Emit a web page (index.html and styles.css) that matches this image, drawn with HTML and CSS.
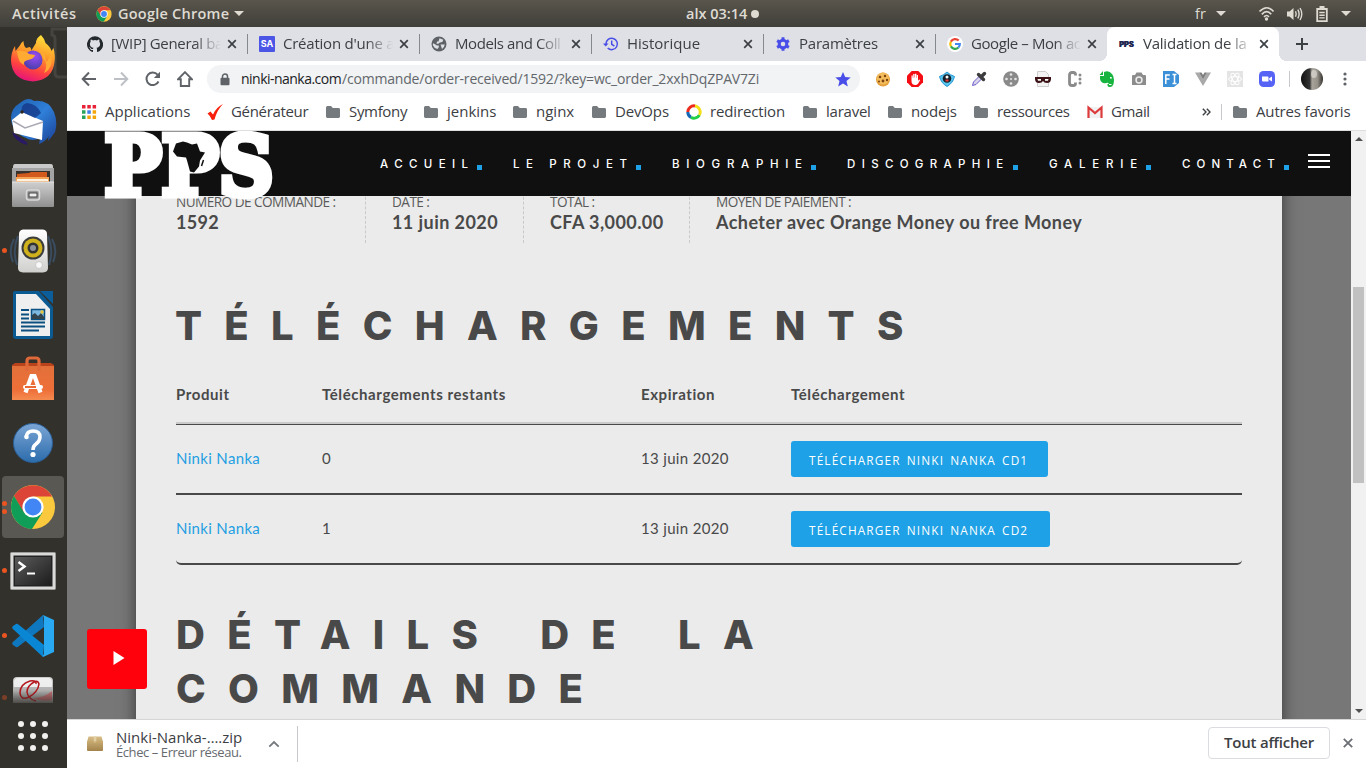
FILE: index.html
```html
<!DOCTYPE html>
<html lang="fr">
<head>
<meta charset="utf-8">
<title>Validation de la commande</title>
<link rel="stylesheet" href="styles.css">
</head>
<body>
<svg width="0" height="0" class="defs">
  <defs>
    <linearGradient id="ff" x1="0.7" y1="0" x2="0.35" y2="1"><stop offset="0" stop-color="#ffe23a"/><stop offset=".4" stop-color="#ff9a2a"/><stop offset=".72" stop-color="#ff4340"/><stop offset="1" stop-color="#e5127c"/></linearGradient>
    <radialGradient id="ffp" cx=".6" cy=".3" r=".7"><stop offset="0" stop-color="#9a4cf5"/><stop offset="1" stop-color="#4a3fae"/></radialGradient>
    <linearGradient id="tb" x1="0" y1="0" x2="1" y2="1"><stop offset="0" stop-color="#1d5fae"/><stop offset=".5" stop-color="#2f7fd8"/><stop offset="1" stop-color="#1a3e94"/></linearGradient>
    <linearGradient id="gry" x1="0" y1="0" x2="0" y2="1"><stop offset="0" stop-color="#cfcfcf"/><stop offset="1" stop-color="#8f8f8f"/></linearGradient>
    <linearGradient id="wht" x1="0" y1="0" x2="0" y2="1"><stop offset="0" stop-color="#fff"/><stop offset="1" stop-color="#cfcfcd"/></linearGradient>
    <linearGradient id="org" x1="0" y1="0" x2="0" y2="1"><stop offset="0" stop-color="#e2703a"/><stop offset=".7" stop-color="#ee6f38"/><stop offset="1" stop-color="#f58b50"/></linearGradient>
    <linearGradient id="hlp" x1="0" y1="0" x2="0" y2="1"><stop offset="0" stop-color="#7ba6d6"/><stop offset="1" stop-color="#2c6cab"/></linearGradient>
    <linearGradient id="trm" x1="0" y1="0" x2="1" y2="1"><stop offset="0" stop-color="#5a5a5a"/><stop offset="1" stop-color="#1d1d1d"/></linearGradient>
    <linearGradient id="box" x1="0" y1="0" x2="0" y2="1"><stop offset="0" stop-color="#d8bd88"/><stop offset="1" stop-color="#a3834b"/></linearGradient>
    <linearGradient id="ava" x1="0" y1="0" x2="1" y2="0"><stop offset="0" stop-color="#111"/><stop offset=".4" stop-color="#333"/><stop offset=".5" stop-color="#a8a49c"/><stop offset=".75" stop-color="#96928a"/><stop offset="1" stop-color="#34322e"/></linearGradient>
    <symbol id="folder" viewBox="0 0 16 16"><path fill="#757a7e" d="M1 3.600Q1 2 2.500 2H6l1.800 2H13.600Q15 4 15 5.400v7.200Q15 14 13.600 14H2.400Q1 14 1 12.600z"/></symbol>
    <symbol id="chrome" viewBox="0 0 46 46">
      <circle cx="23" cy="23" r="22" fill="#fbc93d"/>
      <path fill="#db4437" d="M4 12A22 22 0 0 1 42.100 12.500L23 12.500 13.500 28.500z"/>
      <path fill="#0f9d58" d="M4 12A22 22 0 0 0 22 45L32.500 28.500H14z"/>
      <circle cx="23" cy="23" r="10.600" fill="#fff"/><circle cx="23" cy="23" r="8.400" fill="#4285f4"/>
    </symbol>
    <symbol id="x" viewBox="0 0 10 10"><path d="M1.200 1.200l7.600 7.600M8.800 1.200L1.200 8.800" stroke="#3c4043" stroke-width="1.700"/></symbol>
  </defs>
</svg>

<header class="topbar">
  <span class="act">Activités</span>
  <svg class="tchrome"><use href="#chrome"/></svg>
  <span class="app">Google Chrome</span>
  <i class="caret"></i>
  <span class="clock">alx 03:14</span><i class="dot"></i>
  <span class="lang">fr</span><i class="caret lang-caret"></i>
  <svg class="sys" width="72" height="18" viewBox="0 0 72 18" fill="none" stroke="#dfdbd2">
    <path d="M.5 6.500Q8-1 14.500 6.500M2.800 9.300Q7.800 4 12.200 9.300M5 11.800Q7.600 9.200 10 11.800" stroke-width="1.700"/><circle cx="7.500" cy="14" r="1.700" fill="#dfdbd2" stroke="none"/>
    <path d="M28 6.500h2.500l4-3.500v12l-4-3.500H28z" fill="#dfdbd2" stroke="none"/><path d="M36.500 6.300q1.400 2.700 0 5.400M38.800 4.600q2.600 4.400 0 8.800M41 3q3.600 6 0 12" stroke-width="1.400"/>
    <path d="M58.200 4h9.600v12.200h-9.600z" stroke-width="1.800"/><path d="M60.500 2h5" stroke-width="2"/><path d="M60.300 7.500h5.400M60.300 10.200h5.400M60.300 12.900h5.400" stroke-width="1.400"/>
  </svg>
  <i class="caret"></i>
</header>

<div class="desktop">
<aside class="dock">
  <svg class="ghost" width="18" height="60" viewBox="0 0 18 60"><path d="M18 2H3V8q3 0 3 4v34q0 4 4 4h8" fill="none" stroke="#45443f" stroke-width="3"/></svg>
  <div class="slot"><svg width="46" height="48" viewBox="0 0 46 48"><path fill="url(#ff)" d="M31 1q3 3 4.500 8 5 4 6 8l2-3q2 8 1 14-2 18-21.500 19.500Q2 46 1 27 1 18 5 12l.5 5 4-5q2-4 4-5 0 5 2.500 7l4-1q2 2 1 4l5-8q0-5 5-8z"/><circle cx="23" cy="26" r="9.500" fill="url(#ffp)"/><path fill="#ffab33" d="M7 17q8-1 12 3l6 1q-1 4-7 5-5 1-4 5-6-2-7-14zM29 16q7 3 7 12 4-3 4-9 5 14-6 20 5-9-1-15-1-4-4-8z"/></svg></div>
  <div class="slot"><svg width="50" height="48" viewBox="0 0 50 48"><path fill="url(#tb)" d="M12 5Q20-2 26 3 40 1 46 14q4 10 1 20-4 6-7 9 0-3 1-5-4 6-10 8 1-4 1-6-8 4-14 0-10-4-14-14Q0 12 12 5z"/><path fill="#fff" d="M4 22l10-8 21 9-1 19-28-7z"/><path d="M5 23l12 7 18-6" fill="none" stroke="#a9a9b4" stroke-width="1.500"/><path fill="#12317f" d="M14 14q-2-7 5-9 10 1 14 10l-6 5z" opacity=".7"/><path fill="#2a1a66" d="M4 34l13 9q3 2 2 4-12-3-15-13z"/><circle cx="14" cy="14" r="1.700" fill="#31271c"/></svg></div>
  <div class="slot"><svg width="44" height="46" viewBox="0 0 44 46"><path fill="#c9c9c9" d="M4 1h36q2 0 2 3v18H2V4q0-3 2-3z"/><path fill="#a3a3a3" d="M1 5h42v16H1z"/><path fill="#39322c" d="M5 8h34v14H5z"/><path fill="#d15a1c" d="M6 11l12-1 2-1h16v12H6z"/><path fill="#f6a355" d="M5 14h33v6H5z"/><path fill="#fff1dc" d="M6 16h31v2H6z"/><path fill="url(#gry)" d="M1 19h42v24q0 1-1 1H2q-1 0-1-1z"/><path d="M1 19h42" stroke="#e4e4e4"/><rect x="15.500" y="27" width="13" height="10" rx="2.500" fill="#999" stroke="#d8d8d8" stroke-width="1.500"/><rect x="18" y="30" width="8" height="4" fill="#eee" stroke="#444"/></svg></div>
  <div class="slot run"><svg width="48" height="44" viewBox="0 0 48 44"><g fill="none" stroke="#394c60" stroke-width="2"><path d="M9 7Q3 21 8 36M5 10Q-1 21 4 33M39 7q6 14 1 29M43 10q6 11 1 23"/></g><path d="M10 5q0-4 4-4.500h20Q38 1 38 5l1 34q0 4-5 4.500H14Q9 43 9 39z" fill="url(#wht)"/><circle cx="24" cy="19" r="11.500" fill="#3b3c3c"/><circle cx="24" cy="19" r="9.500" fill="#cfb11c"/><circle cx="24" cy="19" r="5.500" fill="#333"/><circle cx="24" cy="19" r="3" fill="#8c9297"/><circle cx="30" cy="36" r="3.500" fill="#f8f8f8" stroke="#c9c9c9"/></svg></div>
  <div class="slot"><svg width="42" height="50" viewBox="0 0 42 50"><path fill="#0b5a91" d="M3 1h24l14 16v29q0 3-3 3H4q-3 0-3-3V3q0-2 2-2z"/><path fill="#0b5e9a" d="M28 1h13v13z"/><path fill="#efefef" d="M4 4h20l14 15v27H4z"/><path stroke="#0b4f80" stroke-width="2" d="M9 20h8M9 24.500h8M9 28.500h8M9 32.500h24M9 36.500h24M9 40.500h18"/><path fill="#7db8e0" stroke="#0b4f80" stroke-width="1.500" d="M19.500 19.500h13v10h-13z"/><path fill="#33444d" d="M20 29v-4l3-2 3 3 3-3 3 4v2z"/><circle cx="30" cy="22" r="1.700" fill="#e8c53a"/></svg></div>
  <div class="slot"><svg width="44" height="46" viewBox="0 0 44 46"><path fill="#b9431a" d="M1 9l3-2h36l3 2v6H1z"/><path fill="url(#org)" d="M1 10h42v34H1z"/><path d="M16 15V5q0-3 3-3h6q3 0 3 3v10" fill="none" stroke="#e0693a" stroke-width="3.200"/><path d="M14.500 36.500L20.500 20h3l6 16.500" fill="none" stroke="#fff" stroke-width="4.200"/><path stroke="#fff" stroke-width="4" stroke-linecap="round" d="M14 31h16"/><path stroke="#ea6a35" stroke-width="2" d="M14 31h11"/></svg></div>
  <div class="slot"><svg width="42" height="42" viewBox="0 0 42 42"><circle cx="21" cy="21" r="19.500" fill="url(#hlp)" stroke="#2a5f99"/><path d="M14 15q1-6 7-6 7 0 7 6 0 4-4 7-3 2-3 6" fill="none" stroke="#fff" stroke-width="3.500"/><circle cx="14.500" cy="15" r="2.300" fill="#fff"/><circle cx="21" cy="32.500" r="2.600" fill="#fff"/></svg></div>
  <div class="slot active"><svg width="46" height="46"><use href="#chrome"/></svg></div>
  <div class="slot run"><svg width="46" height="38" viewBox="0 0 46 38"><rect x=".5" y=".5" width="45" height="37" rx="1" fill="#dadad8" stroke="#9c9c9a"/><rect x="3.500" y="3.500" width="39" height="31" fill="#222"/><rect x="5" y="5" width="36" height="28" fill="url(#trm)"/><path d="M8.500 10l6 4.500-6 4.500" fill="none" stroke="#fff" stroke-width="2.500"/><path d="M17 21.500h8" stroke="#fff" stroke-width="2"/></svg></div>
  <div class="slot run"><svg width="44" height="44" viewBox="0 0 44 44"><path fill="#0f77be" d="M32 1L3 27q-3 2-1 4l3 2q1 1 3-1L33 13z"/><path fill="#0a87d4" d="M32 43L3 16q-3-2-1-4l3-2q1-1 3 1L33 31z"/><path fill="#29a9f2" d="M32 1l11 5v32l-11 5q-1-1 1-3V4z"/></svg></div>
  <div class="slot last"><svg width="42" height="27" viewBox="0 0 42 27"><path fill="url(#gry)" d="M1 5q0-4 4-4h32q4 0 4 4v22H1z"/><path fill="#f6f6f6" d="M2 6q0-4 4-4h30q4 0 4 4v5H2z" opacity=".85"/><path d="M24 8Q25 4 18 5 8 8 8 17q1 8 9 4 9-5 10-13-1-4-5-2-7 4-7 10 1 7 9 9" fill="none" stroke="#b3151c" stroke-width="1.500"/><path fill="#c8565a" d="M40 15v9q-11 2-19-2 11 0 19-7z" opacity=".7"/></svg></div>
  <div class="apps"><i></i><i></i><i></i><i></i><i></i><i></i><i></i><i></i><i></i></div>
</aside>

<div class="window">
  <div class="tabs">
    <div class="tab"><svg class="fav" viewBox="0 0 16 16"><path fill="#24292e" d="M8 .3a8 8 0 0 0-2.500 15.600c.4 0 .5-.2.500-.4v-1.500c-2.200.5-2.700-1-2.700-1-.4-1-.9-1.200-.9-1.200-.7-.5.1-.5.1-.5.800.1 1.200.9 1.200.9.700 1.200 1.900.9 2.300.7.100-.5.300-.9.500-1.100-1.800-.2-3.600-.9-3.600-4 0-.9.300-1.600.8-2.100-.1-.2-.4-1 .1-2.100 0 0 .7-.2 2.200.8a7.500 7.500 0 0 1 4 0c1.500-1 2.200-.8 2.200-.8.400 1.100.2 1.900.1 2.100.5.500.8 1.200.8 2.100 0 3.100-1.900 3.800-3.700 4 .3.300.6.800.6 1.500v2.200c0 .2.100.5.600.4A8 8 0 0 0 8 .3z"/></svg><span class="tt ls3">[WIP] General ba</span><svg class="cls"><use href="#x"/></svg></div>
    <div class="tab"><span class="fav sa">SA</span><span class="tt ls2">Création d'une a</span><svg class="cls"><use href="#x"/></svg></div>
    <div class="tab"><svg class="fav" viewBox="0 0 16 16"><circle cx="8" cy="8" r="7.500" fill="#5f6368"/><path fill="#dee1e6" d="M2 9.500Q1.500 8 2.300 7.200L6 9.500h1.800v1.700L6.500 13q-3.300-.5-4.500-3.500zM8.500 2.300l3.800 1.500-1 2.200-2.500.5-1.500 1.300H5.500L6 5.500h1.500zM9.500 8.500h4.300q-.5 3.200-2.800 4.500l-.6-2z"/></svg><span class="tt ls4">Models and Coll</span><svg class="cls"><use href="#x"/></svg></div>
    <div class="tab"><svg class="fav" viewBox="0 0 16 16"><path fill="none" stroke="#4a4ee8" stroke-width="1.500" d="M3 8a5.700 5.700 0 1 1 1.700 4M8.700 4.500V8.300l2.700 1.700"/><path fill="#4a4ee8" d="M0 7.500h5.500L2.700 10.500z"/></svg><span class="tt">Historique</span><svg class="cls"><use href="#x"/></svg></div>
    <div class="tab"><svg class="fav" viewBox="0 0 16 16"><circle cx="8" cy="8" r="3.800" fill="none" stroke="#4a4ee8" stroke-width="3"/><path d="M8 1.200v3M8 11.800v3M2.100 4.600l2.600 1.500M11.300 9.900l2.600 1.500M2.100 11.400l2.600-1.500M11.300 6.100l2.600-1.500" stroke="#4a4ee8" stroke-width="3"/></svg><span class="tt ls2">Paramètres</span><svg class="cls"><use href="#x"/></svg></div>
    <div class="tab nosep"><svg class="fav" viewBox="0 0 16 16"><circle cx="8" cy="8" r="8" fill="#fff"/><g fill="none" stroke-width="2.200"><path stroke="#ea4335" d="M3.900 5.600a4.900 4.900 0 0 1 7.800-1"/><path stroke="#fbbc05" d="M3.900 10.400a4.900 4.900 0 0 1 0-4.800"/><path stroke="#34a853" d="M11.500 11.500a4.900 4.900 0 0 1-7.600-1.100"/><path stroke="#4285f4" d="M8 8h4.800a4.900 4.900 0 0 1-1.400 3.600"/></g></svg><span class="tt ls4">Google – Mon ac</span><svg class="cls"><use href="#x"/></svg></div>
    <div class="tab on"><span class="fav pps">PPS</span><span class="tt ls2">Validation de la</span><svg class="cls"><use href="#x"/></svg></div>
    <svg class="plus" width="12" height="12" viewBox="0 0 12 12"><path d="M6 0v12M0 6h12" stroke="#3c4043" stroke-width="2"/></svg>
  </div>

  <div class="toolbar">
    <svg class="nav" viewBox="0 0 16 16"><path d="M15 8H2M8 1.500L1.700 8 8 14.500" fill="none" stroke="#5f6368" stroke-width="2"/></svg>
    <svg class="nav" viewBox="0 0 16 16"><path d="M1 8h13M8 1.500L14.300 8 8 14.500" fill="none" stroke="#bdc1c6" stroke-width="2"/></svg>
    <svg class="nav" viewBox="0 0 16 16"><path d="M13.500 10.500A6.300 6.300 0 1 1 12.600 3.700" fill="none" stroke="#5f6368" stroke-width="2"/><path fill="#5f6368" d="M15 .8V7H8.800z"/></svg>
    <svg class="nav" viewBox="0 0 16 16"><path d="M8 1.200L1.200 8.200H3.800V15h8.400V8.200h2.600z" fill="none" stroke="#5f6368" stroke-width="1.900"/></svg>
    <div class="omni">
      <svg width="10" height="13" viewBox="0 0 10 13"><path d="M2.500 5.500V3.500a2.500 2.500 0 0 1 5 0v2" fill="none" stroke="#5f6368" stroke-width="1.500"/><rect x=".5" y="4.800" width="9" height="7.500" rx="1" fill="#5f6368"/></svg>
      <span class="host">ninki-nanka.com</span><span class="path">/commande/order-received/1592/?key=wc_order_2xxhDqZPAV7Zi</span>
      <svg class="star" width="16" height="15" viewBox="0 0 16 15"><path fill="#4a4ee8" d="M8 0l2.200 5 5.500.5-4.200 3.600 1.300 5.400L8 11.600l-4.800 2.900 1.300-5.400L.3 5.500 5.800 5z"/></svg>
    </div>
    <div class="exts">
      <svg viewBox="0 0 16 16"><circle cx="8" cy="8.500" r="7" fill="#e6a23c"/><circle cx="8" cy="7.500" r="6" fill="#f3bc5c"/><g fill="#7c4311"><circle cx="5" cy="6" r="1.300"/><circle cx="10" cy="5" r="1.200"/><circle cx="8" cy="10" r="1.400"/><circle cx="12" cy="9" r="1.200"/><circle cx="4" cy="10.500" r="1"/></g></svg>
      <svg viewBox="0 0 16 16"><path fill="#f40d12" d="M4.700 0h6.600L16 4.700v6.600L11.300 16H4.700L0 11.300V4.700z"/><path fill="#fff" d="M4.500 8V4.500h1.300V7h.4V3h1.400v3.500H8V2.800h1.400v4h.4V4H11v6l1-1.500 1.200.5-2 3.500q-1 1.500-3 1.500-3.700 0-3.700-4z"/></svg>
      <svg viewBox="0 0 16 16"><path fill="#57c4ee" stroke="#2794cf" d="M.5 5.500Q5 4 8 1q3 3 7.500 4.500Q14 12 8 15.500 2 12 .5 5.500z"/><circle cx="8" cy="7.500" r="4.300" fill="#16222b"/><circle cx="8" cy="6" r="1.500" fill="#fff"/><path d="M6.500 9.500h3" stroke="#e33" stroke-width="2"/></svg>
      <svg viewBox="0 0 16 16"><path d="M1.500 14.500l1-3.500 6-6 2.500 2.500-6 6z" fill="#d9d3ea" stroke="#6d5bc9"/><path d="M7.500 3.500l5 5M10.500 5.500l3-3" stroke="#3c3c3f" stroke-width="3.400" stroke-linecap="round"/></svg>
      <svg viewBox="0 0 16 16"><circle cx="8" cy="8" r="7.800" fill="#8a8a8a"/><g fill="#e6e6e6"><circle cx="8" cy="3.500" r="1.300"/><circle cx="8" cy="12.500" r="1.300"/><circle cx="3.500" cy="8" r="1.300"/><circle cx="12.500" cy="8" r="1.300"/><circle cx="8" cy="8" r="1"/></g></svg>
      <svg viewBox="0 0 16 16"><path fill="#f3f3f3" stroke="#ccc" d="M2.500.5h8l3 3v12h-11z"/><path fill="#3b1216" d="M0 6h16q.5 6-4 6-3 0-4-2-1 2-4 2-4.500 0-4-6z"/><path fill="#fff" d="M2.500 8h3.500v1.800H3zM10 8h3.500L13 9.800h-3z"/></svg>
      <svg viewBox="0 0 16 16"><path d="M8.500 4.500V3.500Q8.500 1.500 6.500 1.500h-1.500Q2.500 1.500 2.500 4v8q0 2.500 2.500 2.500h1.500Q8.500 14.500 8.500 12.500v-1" fill="none" stroke="#8b8b8b" stroke-width="2.800"/><g fill="#8b8b8b"><circle cx="13" cy="4" r="1.500"/><circle cx="13" cy="8" r="1.500"/><circle cx="13" cy="12" r="1.500"/></g></svg>
      <svg viewBox="0 0 16 16"><path fill="#17b53f" d="M5 1q5-2 8 2 3 3 1.500 10-1 3-3.500 3-3 0-2.500-2.500.500-1.500 2-1-1.500-1-3-.5Q2 13 1 8V5h4z"/><path fill="#17b53f" d="M4 0v4H.5z"/><path fill="#fff" d="M11 6h1.500l.5 1.500h-2zM10 13h2.500v1H10z"/></svg>
      <svg viewBox="0 0 16 16"><path fill="#8c8c8c" d="M2 4h2l1.500-2.500h5L12 4h2q1 0 1 1v9H1V5q0-1 1-1z"/><circle cx="8" cy="9" r="3.700" fill="#eee"/><circle cx="8" cy="9" r="2.200" fill="#8c8c8c"/></svg>
      <svg viewBox="0 0 16 16"><path fill="#3c90d8" d="M0 0h11l5 4v8l-5 4H0z"/><path d="M2.800 13V4h4M3 8h3.500M9.500 3.500h4M11.500 3.500v9M9.500 12.500h4" stroke="#fff" stroke-width="1.500" fill="none"/></svg>
      <svg viewBox="0 0 16 16"><path fill="#a9a9a9" d="M0 1.500h4L8 8.500l4-7h4L8 15z"/><path fill="#7e7e7e" d="M4 1.500h2.500L8 4l1.500-2.500H12l-4 7z"/></svg>
      <svg viewBox="0 0 16 16"><path fill="#e4e4e4" d="M0 0h16v16H0z"/><g fill="none" stroke="#fff"><ellipse cx="8" cy="8" rx="6.500" ry="2.500"/><ellipse cx="8" cy="8" rx="6.500" ry="2.500" transform="rotate(60 8 8)"/><ellipse cx="8" cy="8" rx="6.500" ry="2.500" transform="rotate(120 8 8)"/></g></svg>
      <svg viewBox="0 0 16 16"><rect width="16" height="16" rx="4.500" fill="#5663f5"/><path fill="#fff" d="M3 5.500h5.500q1 0 1 1v4H4q-1 0-1-1zM10.200 7.300L13 5.500v5l-2.800-1.800z"/></svg>
    </div>
    <i class="vsep"></i>
    <svg class="avatar" width="22" height="22" viewBox="0 0 22 22"><circle cx="11" cy="11" r="11" fill="url(#ava)"/><ellipse cx="13" cy="6" rx="3" ry="4" fill="#e8e6e0" opacity=".6"/></svg>
    <svg class="dots" width="4" height="14" viewBox="0 0 4 14" fill="#5f6368"><circle cx="2" cy="2" r="1.600"/><circle cx="2" cy="7" r="1.600"/><circle cx="2" cy="12" r="1.600"/></svg>
  </div>

  <div class="marks">
    <div class="mk"><svg viewBox="0 0 16 16"><path fill="#ea2238" d="M1 1h3.500v3.500H1zM6.300 1h3.500v3.500H6.300zM11.600 1h3.500v3.500h-3.500z"/><path fill="#27a35a" d="M1 6.300h3.500v3.500H1zM1 11.600h3.500v3.500H1z"/><path fill="#3f7de8" d="M6.300 6.300h3.500v3.500H6.300z"/><path fill="#f2a60c" d="M11.600 6.300h3.500v3.500h-3.500zM6.300 11.600h3.500v3.500H6.300zM11.600 11.600h3.500v3.500h-3.500z"/></svg><span>Applications</span></div>
    <div class="mk"><svg viewBox="0 0 16 16"><path fill="#f8200c" d="M.5 9.500l3-2 2.500 3Q9 3.500 16 0 10 6 7.500 15.500L5 16Q3.500 12 .5 9.500z"/></svg><span class="ls3">Générateur</span></div>
    <div class="mk"><svg><use href="#folder"/></svg><span class="ls3">Symfony</span></div>
    <div class="mk"><svg><use href="#folder"/></svg><span>jenkins</span></div>
    <div class="mk"><svg><use href="#folder"/></svg><span>nginx</span></div>
    <div class="mk"><svg><use href="#folder"/></svg><span class="ls1">DevOps</span></div>
    <div class="mk"><svg viewBox="0 0 16 16" fill="none" stroke-width="3"><path stroke="#1268b5" d="M1.800 8A6.200 6.200 0 0 0 5 13.400"/><path stroke="#1fcf45" d="M5 13.400A6.200 6.200 0 0 0 13.400 11"/><path stroke="#f3e01b" d="M13.400 11A6.200 6.200 0 0 0 9 1.900"/><path stroke="#ef2b1d" d="M9 1.900A6.200 6.200 0 0 0 1.800 8"/></svg><span class="ls1">redirection</span></div>
    <div class="mk"><svg><use href="#folder"/></svg><span class="ls2">laravel</span></div>
    <div class="mk"><svg><use href="#folder"/></svg><span class="ls1">nodejs</span></div>
    <div class="mk"><svg><use href="#folder"/></svg><span class="ls3">ressources</span></div>
    <div class="mk"><svg viewBox="0 0 16 16"><path fill="#f1f1f1" d="M1 3h14v11H1z"/><path d="M1.500 14V3.500L8 9l6.500-5.500V14" fill="none" stroke="#dd3b3b" stroke-width="2.200"/></svg><span class="ls4">Gmail</span></div>
    <svg class="chev" width="9" height="8" viewBox="0 0 9 8"><path d="M.8.800L4 4 .8 7.200M4.800.800L8 4 4.800 7.200" fill="none" stroke="#3c4043" stroke-width="1.400"/></svg>
    <i class="vsep"></i>
    <div class="mk other"><svg><use href="#folder"/></svg><span class="ls1">Autres favoris</span></div>
  </div>

  <div class="viewport">
    <main class="page">
      <div class="card">
        <ul class="overview">
          <li class="o1">NUMÉRO DE COMMANDE :<strong class="n">1592</strong></li>
          <li class="o2">DATE :<strong>11 juin 2020</strong></li>
          <li class="o3">TOTAL :<strong>CFA 3,000.00</strong></li>
          <li class="o4">MOYEN DE PAIEMENT :<strong>Acheter avec Orange Money ou free Money</strong></li>
        </ul>
        <h2>TÉLÉCHARGEMENTS</h2>
        <div class="table">
          <div class="row head"><span>Produit</span><span>Téléchargements restants</span><span>Expiration</span><span>Téléchargement</span></div>
          <div class="row"><a>Ninki Nanka</a><span>0</span><span>13 juin 2020</span><span class="cell"><b class="btn">TÉLÉCHARGER NINKI NANKA CD1</b></span></div>
          <div class="row end"><a>Ninki Nanka</a><span>1</span><span>13 juin 2020</span><span class="cell"><b class="btn two">TÉLÉCHARGER NINKI NANKA CD2</b></span></div>
        </div>
        <h2 class="details">DÉTAILS DE LA<br>COMMANDE</h2>
      </div>
      <header class="site">
        <svg class="logo" width="170" height="68" viewBox="0 0 170 68">
          <g class="logotext"><text x="-.5" y="63.500" textLength="169" lengthAdjust="spacingAndGlyphs">PPS</text></g>
          <path fill="#fff" d="M66 9h34v32H66z"/>
          <path fill="#101010" d="M71 12.500l7-2 4 1 5 2 5-1 3 8 5 1-5 8-1 6-5 6-4-1-3-11-1-3-9-1-4-5z"/><path stroke="#101010" stroke-width="1.500" d="M98.500 29l-2 6"/>
        </svg>
        <nav>
          <a class="m1">ACCUEIL</a><a class="m2">LE PROJET</a><a class="m3">BIOGRAPHIE</a><a class="m4">DISCOGRAPHIE</a><a class="m5">GALERIE</a><a class="m6">CONTACT</a>
        </nav>
        <div class="burger"><i></i><i></i><i></i></div>
      </header>
      <div class="video"><svg width="12" height="14" viewBox="0 0 12 14"><path fill="#fff" d="M.5 0L11.500 7 .5 14z"/></svg></div>
    </main>
    <div class="scroll"><i class="up"></i><div class="thumb"></div><i class="down"></i></div>
  </div>

  <footer class="shelf">
    <svg class="zip" width="16" height="15" viewBox="0 0 16 15"><path fill="url(#box)" d="M1.500.5h13L16 6v8q0 1-1 1H1q-1 0-1-1V6z"/><path fill="#e3cfa5" d="M6.700.5h2.600v6H6.700z"/><path d="M0 6h16" stroke="#c6a869"/></svg>
    <div class="file"><span class="fname">Ninki-Nanka-….zip</span><span class="fstat">Échec – Erreur réseau.</span></div>
    <svg class="upc" width="12" height="8" viewBox="0 0 12 8"><path d="M1.300 6.700L6 2l4.700 4.700" fill="none" stroke="#757a7e" stroke-width="1.800"/></svg>
    <i class="vsep tall"></i>
    <div class="all">Tout afficher</div>
    <svg class="xx" width="10" height="10" viewBox="0 0 10 10"><path d="M.8.800l8.400 8.400M9.200.800L.8 9.200" stroke="#6b6f74" stroke-width="1.800"/></svg>
  </footer>
</div>
</div>
</body>
</html>
```
FILE: styles.css
```css
* { box-sizing: border-box; }
body { margin: 0; width: 1366px; height: 768px; overflow: hidden; font-family: "Open Sans", sans-serif; font-size: 15px; color: #3c4043; display: flex; flex-direction: column; }
svg { display: block; flex: none; }
i { display: block; flex: none; }
.defs { position: absolute; }

/* system bar */
.topbar { height: 27px; flex: none; display: flex; align-items: center; padding: 0 15px 0 12px; background: linear-gradient(#59554c, #403f3a); color: #dfdbd2; font-weight: 600; font-size: 14.5px; white-space: nowrap; }
.act { width: 84px; letter-spacing: .56px; }
.tchrome { width: 16px; height: 16px; margin-right: 6px; }
.app { width: 116px; letter-spacing: .24px; }
.caret { border: 5px solid transparent; border-top-color: #dfdbd2; border-bottom: 0; }
.clock { margin-left: 442px; width: 64px; }
.dot { width: 8px; height: 8px; border-radius: 50%; background: #dfdbd2; margin-left: 1px; }
.lang { margin-left: auto; width: 21px; font-weight: 500; }
.sys { margin: 0 10px 0 33px; }

.desktop { flex: 1; display: flex; min-height: 0; }

/* launcher */
.dock { width: 67px; flex: none; background: #33312c; display: flex; flex-direction: column; position: relative; }
.ghost { position: absolute; right: 0; top: 0; }
.slot { height: 64.2px; flex: none; display: flex; align-items: center; justify-content: center; position: relative; padding-right: 1px; }
.slot:first-of-type { margin-top: -1px; }
.active { width: 62px; height: 62px; margin: 1px 3px 1px 2px; background: #5a5853; border-radius: 4px; padding-right: 0; }
.run::before, .active::before, .active::after, .last::before { content: ""; position: absolute; left: 2px; top: 29px; width: 5px; height: 5px; border-radius: 50%; background: #e95420; }
.active::before { top: 25px; left: 0; }
.active::after { top: 33px; left: 0; }
.last { height: 27px; margin-top: 8px; }
.last svg { -webkit-mask-image: linear-gradient(#000 55%, rgba(0,0,0,.3)); mask-image: linear-gradient(#000 55%, rgba(0,0,0,.3)); }
.last::before { top: 19px; opacity: .4; }
.apps { display: grid; grid-template-columns: repeat(3, 6px); gap: 6px; margin: 18px 0 0 18px; }
.apps i { width: 6px; height: 6px; border-radius: 50%; background: #f2f1ef; }

.window { flex: 1; display: flex; flex-direction: column; min-width: 0; background: #fff; }

/* tabs */
.tabs { height: 34px; flex: none; background: #dfe0e6; display: flex; align-items: center; padding-left: 8px; }
.tab { width: 172px; height: 34px; padding: 0 10px 0 12px; display: flex; align-items: center; position: relative; }
.tab:not(.on):not(.nosep)::after { content: ""; position: absolute; right: -1px; top: 7px; width: 1px; height: 20px; background: #85888d; }
.nosep::before { content: ""; }
.fav { width: 16px; height: 16px; flex: none; margin-right: 8px; }
.sa { background: #4b55e6; color: #fff; font: 700 9px/16px Inter, sans-serif; text-align: center; border-radius: 1px; }
.pps { font: 900 7.5px/17px Inter, sans-serif; color: #20264f; letter-spacing: -.1px; text-shadow: .4px 0 #20264f; }
.tt { width: 110px; height: 24px; line-height: 23px; overflow: hidden; white-space: nowrap; -webkit-mask-image: linear-gradient(90deg, #000 76%, transparent); mask-image: linear-gradient(90deg, #000 76%, transparent); }
.cls { width: 10px; height: 10px; margin-left: 6px; }
.on { background: #fff; border-radius: 8px 8px 0 0; }
.on::before, .on::after { content: ""; position: absolute; bottom: 0; width: 8px; height: 8px; }
.on::before { left: -8px; background: radial-gradient(circle at 0 0, transparent 8px, #fff 8px); }
.on::after { right: -8px; background: radial-gradient(circle at 100% 0, transparent 8px, #fff 8px); }
.plus { margin-left: 17px; }
.ls1 { letter-spacing: -.15px; }
.ls2 { letter-spacing: -.23px; }
.ls3 { letter-spacing: -.33px; }
.ls4 { letter-spacing: -.41px; }

/* toolbar */
.toolbar { height: 36px; flex: none; display: flex; align-items: center; padding-left: 14px; }
.nav { width: 16px; height: 16px; margin-right: 16px; }
.omni { width: 653px; height: 28px; margin-left: -2px; background: #f1f3f4; border-radius: 14px; display: flex; align-items: center; padding: 0 9px 0 13px; font-size: 14px; line-height: 18px; white-space: nowrap; }
.omni span { padding-bottom: 1px; }
.host { margin-left: 11px; color: #202124; width: 101px; letter-spacing: -.52px; }
.path { color: #63676c; letter-spacing: -.19px; }
.star { margin-left: auto; }
.exts { display: flex; margin-left: 15px; gap: 16px; }
.exts svg { width: 16px; height: 16px; }
.vsep { width: 1px; height: 16px; background: #c6c8cc; }
.toolbar .vsep { margin-left: 14px; }
.avatar { margin-left: 11px; }
.dots { margin-left: 20px; }

/* bookmarks */
.marks { height: 34px; flex: none; border-bottom: 1px solid #dcdfdd; display: grid; grid-template-columns: 126px 118px 98px 89px 79px 95px 116px 85px 86px 114px 115px 19px 11px auto; align-items: center; padding-left: 14px; padding-bottom: 3px; white-space: nowrap; }
.mk { display: flex; align-items: center; gap: 8px; line-height: 20px; }
.mk span { padding-bottom: 2px; }
.mk svg { width: 16px; height: 16px; }

/* page viewport */
.viewport { flex: 1; display: flex; min-height: 0; }
.page { width: 1284px; flex: none; position: relative; overflow: hidden; background: #777; }
.card { width: 1146px; height: 700px; margin-left: 69px; background: #ebebeb; padding: 61px 40px 0; box-shadow: 0 0 15px rgba(0,0,0,.55); color: #494949; }
.overview { list-style: none; margin: 0; padding: 0; display: flex; height: 51px; font-weight: 400; font-size: 13.6px; line-height: 20px; letter-spacing: -.54px; color: #5a5a5a; white-space: nowrap; }
.overview li { border-right: 1px dashed #c9c9c9; margin-right: 26px; }
.overview strong { display: block; font: 700 18px/20px Lato, sans-serif; letter-spacing: .43px; color: #494949; }
.overview .n { letter-spacing: .3px; }
.o1 { width: 190px; }
.o2 { width: 132px; }
.o3 { width: 140px; }
.overview .o4 { border: 0; }
h2 { margin: 56px 0 0 -1px; font: 850 40px/54px Inter, sans-serif; letter-spacing: 22.3px; white-space: nowrap; }
.details { margin: 43px 0 0; word-spacing: 9px; }
.table { margin-top: 11px; font: 15px/20px Lato, sans-serif; letter-spacing: .33px; }
.row { display: grid; grid-template-columns: 146px 319px 150px 1fr; align-items: center; height: 70px; border-bottom: 2px solid #494949; }
.row > :not(.cell) { padding-bottom: 2px; }
.row a { color: #1f9fe3; }
.row.head > span { padding-bottom: 0; }
.head { font-weight: 700; letter-spacing: .58px; height: 61px; border-bottom: 1px solid #494949; box-shadow: inset 0 -2px #cbcbcb; }
.end { border-radius: 0 0 5px 5px; }
.btn { display: inline-block; vertical-align: middle; width: 257px; height: 36px; line-height: 39px; border-radius: 3px; background: #1ea1e6; color: #fff; font-family: "Open Sans", sans-serif; font-weight: 500; font-size: 11.8px; letter-spacing: 1.14px; word-spacing: 2px; padding-left: 18px; white-space: nowrap; }
.two { width: 259px; }

.site { position: absolute; left: 0; top: 0; width: 1284px; height: 65px; background: #101010; display: flex; padding-left: 38px; }
.logo { overflow: visible; }
.logotext { font: 700 82px "DejaVu Serif", serif; fill: #fff; stroke: #fff; stroke-width: 7px; }
nav { display: flex; margin-left: 105px; padding-top: 20px; height: 43px; font: 500 11.5px/20px Inter, sans-serif; color: #fff; white-space: nowrap; }
nav a { display: flex; justify-content: space-between; align-items: flex-end; }
nav a::after { content: ""; width: 5px; height: 5px; margin-bottom: 4px; background: #1ea1e6; }
.m1 { width: 102px; letter-spacing: 6.4px; }
.m2 { width: 128px; margin-left: 31px; letter-spacing: 6.6px; }
.m3 { width: 144px; margin-left: 31px; letter-spacing: 6.7px; }
.m4 { width: 171px; margin-left: 31px; letter-spacing: 6.35px; }
.m5 { width: 102px; margin-left: 31px; letter-spacing: 6.8px; }
.m6 { width: 107px; margin-left: 31px; letter-spacing: 6.1px; }
.burger { margin: 23px 0 0 19px; width: 22px; display: grid; gap: 4px; align-content: start; }
.burger i { height: 2px; background: #fff; }
.video { position: absolute; left: 20px; top: 498px; width: 60px; height: 60px; border-radius: 3px; background: #ff000d; display: flex; align-items: center; justify-content: center; padding: 0 0 2px 3px; }

.scroll { width: 15px; background: #f1f1f1; display: flex; flex-direction: column; align-items: center; }
.up { border: 4px solid transparent; border-bottom-color: #505050; border-top: 0; margin-top: 6px; }
.thumb { width: 11px; height: 196px; background: #c1c1c1; margin-top: 146px; }
.down { border: 4px solid transparent; border-top-color: #505050; border-bottom: 0; margin: auto 0 6px; }

/* download shelf */
.shelf { height: 49px; flex: none; border-top: 1px solid #d5d6d8; background: #fff; display: flex; align-items: center; padding-left: 20px; white-space: nowrap; }
.zip { margin-top: -2px; }
.file { display: flex; flex-direction: column; width: 152px; margin-left: 13px; }
.fname { line-height: 18px; height: 17px; margin-top: -1px; }
.fstat { font-size: 13px; line-height: 14px; letter-spacing: -.42px; color: #666a6f; }
.tall { height: 36px; margin-left: 17px; }
.all { margin-left: auto; width: 122px; height: 32px; margin-top: -2px; border: 1px solid #dadce0; border-radius: 4px; text-align: center; font-weight: 600; line-height: 29px; letter-spacing: -.23px; }
.xx { margin: -2px 13px 0 13px; }
```
